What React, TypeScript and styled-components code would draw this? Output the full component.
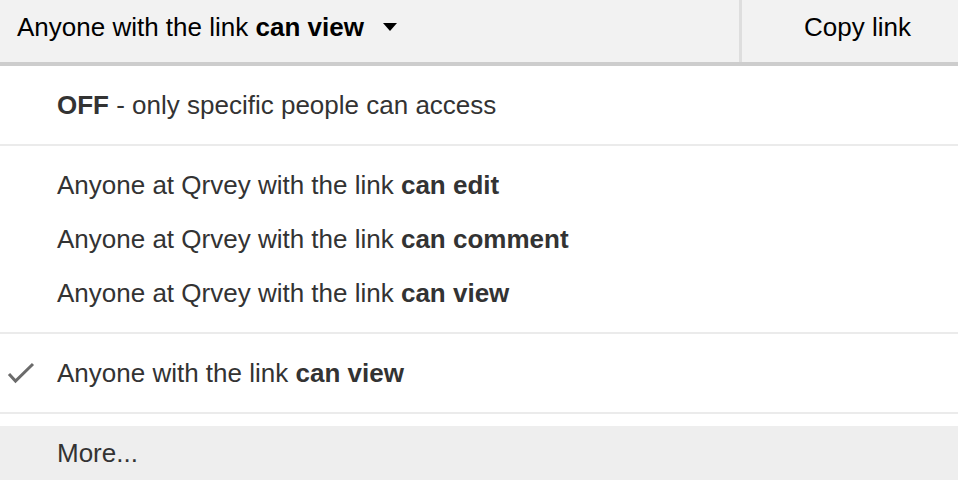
import React from "react";
import styled, { createGlobalStyle } from "styled-components";

const GlobalStyle = createGlobalStyle`
  html, body {
    margin: 0;
    padding: 0;
    background: #ffffff;
  }
  body {
    font-family: "Liberation Sans", Arial, sans-serif;
  }
`;

type Option = {
  id: string;
  plain: string;
  bold: string;
  boldFirst?: boolean;
  checked?: boolean;
};

const groups: Option[][] = [
  [{ id: "off", bold: "OFF", plain: " - only specific people can access", boldFirst: true }],
  [
    { id: "qe", plain: "Anyone at Qrvey with the link ", bold: "can edit" },
    { id: "qc", plain: "Anyone at Qrvey with the link ", bold: "can comment" },
    { id: "qv", plain: "Anyone at Qrvey with the link ", bold: "can view" },
  ],
  [{ id: "av", plain: "Anyone with the link ", bold: "can view", checked: true }],
];

const Page = styled.div`
  width: 958px;
  height: 484px;
  overflow: hidden;
  background: #ffffff;
  font-size: 26px;
`;

const TopBar = styled.div`
  display: flex;
  height: 62px;
  background: #f2f2f2;
  border-bottom: 4px solid #cdcdcd;
`;

const PickerButton = styled.div`
  flex: 1;
  display: flex;
  align-items: center;
  gap: 19px;
  padding: 0 0 8px 17px;
  color: #000000;
  b {
    font-weight: 700;
  }
`;

const CopyButton = styled.div`
  display: flex;
  align-items: center;
  padding: 0 47px 8px 62px;
  border-left: 3px solid #dedede;
  color: #000000;
`;

const Menu = styled.div`
  display: flex;
  flex-direction: column;
  padding-top: 12px;
`;

const Item = styled.div<{ $hover?: boolean }>`
  position: relative;
  display: flex;
  align-items: center;
  height: 54px;
  padding-left: 57px;
  color: #333333;
  background: ${(p) => (p.$hover ? "#eeeeee" : "transparent")};
  b {
    font-weight: 700;
  }
`;

const Separator = styled.div`
  height: 2px;
  margin: 12px 0;
  background: #ebebeb;
`;

const Check = styled.svg`
  position: absolute;
  left: 7px;
  top: 50%;
  transform: translateY(-50%);
`;

const Caret = () => (
  <svg width="14" height="9" viewBox="0 0 14 9">
    <path d="M0 0 H14 L7 8 Z" fill="#000" />
  </svg>
);

export default function App() {
  return (
    <>
      <GlobalStyle />
      <Page>
        <TopBar>
          <PickerButton>
            <span>
              Anyone with the link <b>can view</b>
            </span>
            <Caret />
          </PickerButton>
          <CopyButton>Copy link</CopyButton>
        </TopBar>
        <Menu>
          {groups.map((group, gi) => (
            <React.Fragment key={gi}>
              {group.map((opt) => (
                <Item key={opt.id}>
                  {opt.checked && (
                    <Check width="28" height="22" viewBox="0 0 28 22">
                      <path
                        d="M2 12 L8.5 19 L26 2"
                        fill="none"
                        stroke="#6b6b6b"
                        strokeWidth="3"
                      />
                    </Check>
                  )}
                  {opt.boldFirst ? (
                    <span>
                      <b>{opt.bold}</b>
                      {opt.plain}
                    </span>
                  ) : (
                    <span>
                      {opt.plain}
                      <b>{opt.bold}</b>
                    </span>
                  )}
                </Item>
              ))}
              <Separator />
            </React.Fragment>
          ))}
          <Item $hover>More...</Item>
        </Menu>
      </Page>
    </>
  );
}
